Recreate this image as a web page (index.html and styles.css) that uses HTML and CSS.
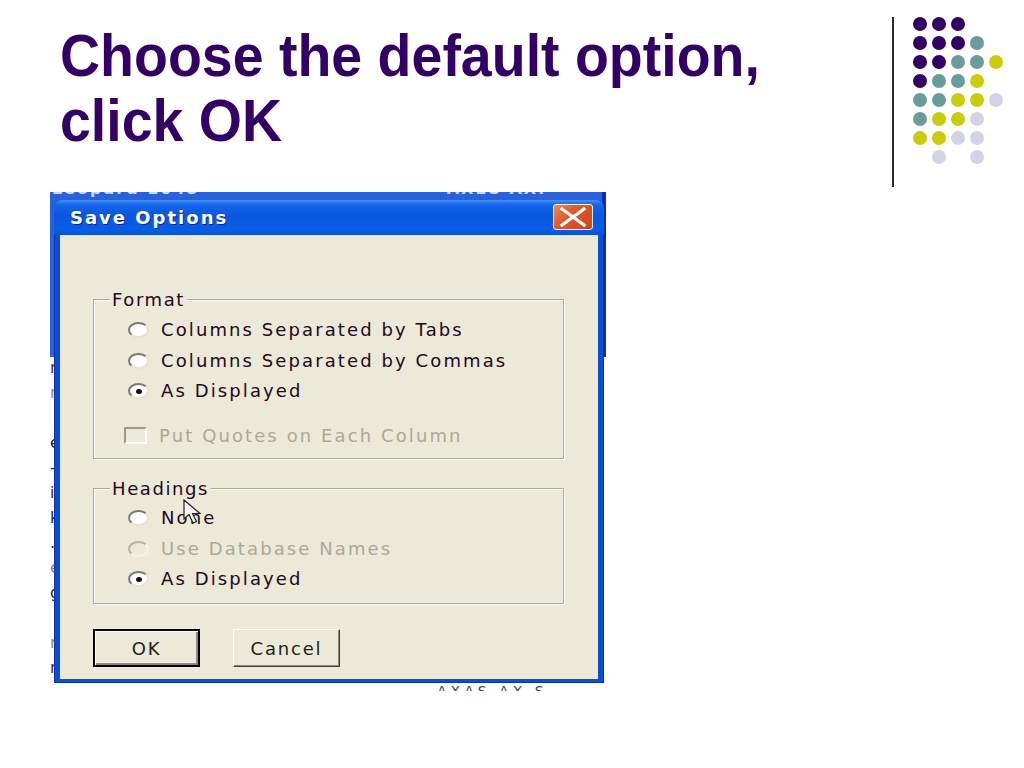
FILE: index.html
```html
<!DOCTYPE html>
<html lang="en">
<head>
  <meta charset="UTF-8" />
  <title>Choose the default option, click OK</title>
  <link rel="stylesheet" href="styles.css">
</head>
<body>
  <div class="head">
    <h1>Choose the default option,<br>click OK</h1>
    <div class="deco">
      <div class="rule"></div>
      <div class="dots">
        <span class="p"></span><span class="p"></span><span class="p"></span><span></span><span></span>
        <span class="p"></span><span class="p"></span><span class="p"></span><span class="t"></span><span></span>
        <span class="p"></span><span class="p"></span><span class="t"></span><span class="t"></span><span class="y"></span>
        <span class="p"></span><span class="t"></span><span class="t"></span><span class="y"></span><span></span>
        <span class="t"></span><span class="t"></span><span class="y"></span><span class="y"></span><span class="l"></span>
        <span class="t"></span><span class="y"></span><span class="y"></span><span class="l"></span><span></span>
        <span class="y"></span><span class="y"></span><span class="l"></span><span class="l"></span><span></span>
        <span></span><span class="l"></span><span></span><span class="l"></span><span></span>
      </div>
    </div>
  </div>

  <div class="shot">
    <div class="backwin">
      <span>Leopard 1045</span>
      <span class="right">AXES AXI</span>
    </div>
    <div class="backcol">
      <div class="m">n</div>
      <div class="g">r</div>
      <div></div>
      <div>e</div>
      <div>-</div>
      <div class="m">i</div>
      <div class="n">k</div>
      <div>.</div>
      <div class="g">e</div>
      <div>g</div>
      <div></div>
      <div class="g">r</div>
      <div class="m">n</div>
    </div>
    <div class="backfoot">AXAS AX S</div>

    <div class="dialog">
      <div class="titlebar">
        <span class="title">Save Options</span>
        <span class="close">
          <svg width="38" height="24" viewBox="0 0 38 24">
            <path d="M8 4 L30 20 M30 4 L8 20" stroke="#fff" stroke-width="3.2" stroke-linecap="square" fill="none"/>
          </svg>
        </span>
      </div>
      <div class="body">
        <div class="group format">
          <span class="legend">Format</span>
          <div class="options">
            <div class="opt"><span class="radio"></span>Columns Separated by Tabs</div>
            <div class="opt"><span class="radio"></span>Columns Separated by Commas</div>
            <div class="opt"><span class="radio on"></span>As Displayed</div>
          </div>
          <div class="opt check off"><span class="box"></span>Put Quotes on Each Column</div>
        </div>

        <div class="group headings">
          <span class="legend">Headings</span>
          <div class="options">
            <div class="opt"><span class="radio"></span>None</div>
            <div class="opt off"><span class="radio"></span>Use Database Names</div>
            <div class="opt"><span class="radio on"></span>As Displayed</div>
          </div>
        </div>

        <div class="buttons">
          <button class="btn default">OK</button>
          <button class="btn">Cancel</button>
        </div>
      </div>
    </div>

    <svg class="cursor" width="26" height="26" viewBox="0 0 26 26">
      <path d="M1 1 L1 20 L6 15.5 L10 24 L13.5 22.5 L9.5 14.5 L17 14.5 Z" fill="#f6f6f6" stroke="#222" stroke-width="1.2" stroke-linejoin="miter"/>
    </svg>
  </div>
</body>
</html>
```

FILE: styles.css
```css
body {
  margin: 0;
  background: #fff;
  font-family: 'Liberation Sans', Arial, sans-serif;
}

.head {
  display: flex;
  height: 192px;
}

h1 {
  margin: 23px 0 0 60px;
  font-size: 55.5px;
  line-height: 60px;
  font-weight: bold;
  color: #330066;
  white-space: nowrap;
  transform: scaleY(1.08);
  transform-origin: top left;
}

.deco {
  display: flex;
  margin-left: auto;
  margin-right: 19px;
}

.rule {
  width: 2px;
  height: 170px;
  margin-top: 17px;
  background: #2a2a2a;
}

.dots {
  display: grid;
  grid-template-columns: repeat(5, 19px);
  grid-auto-rows: 19px;
  margin: 14px 0 0 16px;
}

.dots span {
  width: 14px;
  height: 14px;
  margin: 2.5px;
  border-radius: 50%;
}

.dots .p { background: #330066; }
.dots .t { background: #6b9c9c; }
.dots .y { background: #cccc0f; }
.dots .l { background: #d3d3e6; }

/* the screenshot */
.shot {
  position: relative;
  width: 556px;
  height: 499px;
  margin-left: 50px;
  overflow: hidden;
  font-family: 'DejaVu Sans', Verdana, sans-serif;
}

.backwin {
  height: 165px;
  background: #2a60d8;
  border-right: 4px solid #0c2fa8;
  box-sizing: border-box;
  color: #c8d8ff;
  font-size: 16px;
  font-weight: bold;
  line-height: 16px;
  display: flex;
  padding-left: 2px;
}

.backwin span {
  margin-top: -11px;
  letter-spacing: 2px;
}

.backwin .right {
  margin-left: 247px;
}

.backcol {
  margin-top: -2px;
  font-size: 16px;
  line-height: 25px;
  color: #222;
}

.backcol div {
  height: 25px;
}

.backcol .m { color: #5a1040; }
.backcol .n { color: #1a2060; }
.backcol .g { color: #888; }

.backfoot {
  margin: 4px 0 0 387px;
  font-size: 14px;
  line-height: 14px;
  color: #444;
  letter-spacing: 4px;
}

.dialog {
  position: absolute;
  left: 4px;
  top: 8px;
  width: 550px;
  height: 483px;
  box-sizing: border-box;
  display: flex;
  flex-direction: column;
  background: #0a4fd6;
  border-radius: 8px 8px 0 0;
  box-shadow: inset 0 0 0 1px #0830a8;
}

.titlebar {
  height: 35px;
  display: flex;
  align-items: flex-start;
  padding: 0 11px 0 16px;
  border-radius: 8px 8px 0 0;
  background: linear-gradient(#4a92f6 0, #1768ec 12%, #0857e0 40%, #0a5de6 85%, #0650d8 100%);
}

.title {
  margin-top: 7px;
  font-size: 18px;
  line-height: 22px;
  font-weight: bold;
  letter-spacing: 2px;
  color: #fff;
  text-shadow: 1px 1px 0 #0a2a8a;
}

.close {
  margin: 4px 0 0 auto;
  width: 38px;
  height: 24px;
  border: 1px solid #f2f2f2;
  border-radius: 3px;
  background: linear-gradient(135deg, #f08a60 0, #e0582c 40%, #cf4418 100%);
  display: flex;
}

.body {
  flex: 1;
  margin: 0 6px 4px 6px;
  padding: 64px 0 0 33px;
  background: #ece9d8;
  font-size: 18px;
  line-height: 22px;
  letter-spacing: 2.1px;
  color: #24081c;
}

.group {
  box-sizing: border-box;
  width: 471px;
  border: 1px solid #aca899;
  box-shadow: inset 1px 1px 0 #fff, 1px 1px 0 #fff;
  padding-left: 34px;
}

.format { height: 160px; }

.headings {
  height: 116px;
  margin-top: 29px;
}

.legend {
  display: block;
  width: max-content;
  margin: -11px 0 0 -18px;
  padding: 0 2px;
  background: #ece9d8;
  letter-spacing: 1.6px;
}

.format .options { margin-top: 4px; }
.headings .options { margin-top: 3px; }

.opt {
  display: flex;
  align-items: center;
  height: 30.5px;
}

.opt.off { color: #aca899; }

.radio {
  width: 21px;
  height: 16px;
  margin-right: 12px;
  box-sizing: border-box;
  border-radius: 50%;
  background: #fff;
  border: 2px solid;
  border-color: #7a7a7a #e6e3d4 #e6e3d4 #7a7a7a;
  display: flex;
  align-items: center;
  justify-content: center;
}

.radio.on::after {
  content: "";
  width: 6px;
  height: 5px;
  border-radius: 50%;
  background: #111;
}

.opt.off .radio {
  background: #ece9d8;
  border-color: #b8b5a6 #f6f4ea #f6f4ea #b8b5a6;
}

.check {
  margin: 14px 0 0 -4px;
}

.box {
  width: 23px;
  height: 17px;
  margin-right: 12px;
  box-sizing: border-box;
  border: 2px solid;
  border-color: #9a988c #fff #fff #9a988c;
  background: #ece9d8;
}

.buttons {
  display: flex;
  gap: 33px;
  margin-top: 25px;
}

.btn {
  width: 107px;
  height: 38px;
  box-sizing: border-box;
  background: #ece9d8;
  font-family: 'DejaVu Sans', Verdana, sans-serif;
  font-size: 18px;
  letter-spacing: 1.8px;
  color: #222;
  border: 1px solid;
  border-color: #fff #404040 #404040 #fff;
  box-shadow: inset -1px -1px 0 #8a8a80;
  padding: 0;
}

.btn.default {
  border: 2px solid #000;
  box-shadow: inset 1px 1px 0 #fff, inset -2px -2px 0 #8a8a80;
}

.cursor {
  position: absolute;
  left: 133px;
  top: 307px;
}
```
